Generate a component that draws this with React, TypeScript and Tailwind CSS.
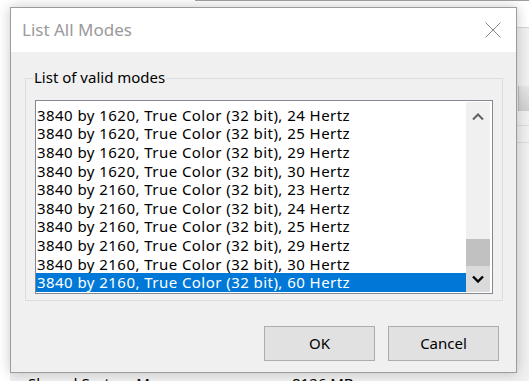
import { useState } from "react"

const modes = [
    "3840 by 1620, True Color (32 bit), 24 Hertz",
    "3840 by 1620, True Color (32 bit), 25 Hertz",
    "3840 by 1620, True Color (32 bit), 29 Hertz",
    "3840 by 1620, True Color (32 bit), 30 Hertz",
    "3840 by 2160, True Color (32 bit), 23 Hertz",
    "3840 by 2160, True Color (32 bit), 24 Hertz",
    "3840 by 2160, True Color (32 bit), 25 Hertz",
    "3840 by 2160, True Color (32 bit), 29 Hertz",
    "3840 by 2160, True Color (32 bit), 30 Hertz",
    "3840 by 2160, True Color (32 bit), 60 Hertz",
]

function Chevron({ down, className }: { down?: boolean, className: string }) {
    return (
        <svg width="12" height="8" viewBox="0 0 12 8" className={className}>
            <polyline
                points={down ? "1,1.5 6,6.5 11,1.5" : "1,6.5 6,1.5 11,6.5"}
                fill="none"
                stroke="currentColor"
                strokeWidth={down ? 2.4 : 2}
            />
        </svg>
    )
}

export default function App() {

    const [selected, setSelected] = useState(9)

    return (
        <div className="relative w-[529px] h-[381px] overflow-hidden bg-white font-['Noto_Sans',sans-serif] text-[15px] text-black">

            {/* ventana de fondo */}
            <div className="h-[27px] border-t border-[#a0a0a0] ml-[195px]" />
            <div className="ml-[10px] h-[354px] bg-[#f0f0f0] border-t border-[#d5d5d5] flex flex-col">
                <div className="flex justify-end mt-[58px]">
                    <div className="w-[11px] h-[25px] bg-gradient-to-b from-[#e6e6e6] to-[#cfcfcf] border-l border-[#bdbdbd]" />
                </div>
                <div className="ml-auto w-[12px] mt-[14px] border-t border-[#dcdcdc]" />
                <div className="ml-auto w-[12px] mt-[16px] border-t border-[#dcdcdc]" />
                <div className="flex mt-auto leading-[18px] -mb-[11px]">
                    <span className="ml-[18px] w-[264px]">Shared System Memory:</span>
                    <span>8126 MB</span>
                </div>
            </div>

            {/* dialogo */}
            <div className="absolute left-[10px] top-[7px] w-[507px] h-[366px] border border-[#9c9c9c] bg-[#f0f0f0] shadow-[0_0_12px_rgba(0,0,0,0.22)] flex flex-col">
                <div className="h-[44px] bg-white flex items-center justify-between pl-[11px] pr-[15px]">
                    <span className="text-[17px] text-[#9a9a9a] leading-[20px] -mt-[1px]">List All Modes</span>
                    <svg width="16" height="16" viewBox="0 0 16 16" className="text-[#8a8a8a]">
                        <path d="M0.5 0.5 L15.5 15.5 M15.5 0.5 L0.5 15.5" stroke="currentColor" strokeWidth="1" />
                    </svg>
                </div>

                <div className="pl-[14px] pt-[26px]">
                    <div className="relative w-[478px] h-[223px] border border-[#dcdcdc]">
                        <span className="absolute left-[7px] -top-[11px] px-[1px] bg-[#f0f0f0] leading-[19px]">List of valid modes</span>

                        <div className="ml-[9px] mt-[21px] w-[458px] h-[194px] border border-[#828790] bg-white flex">
                            <div className="w-[430px] flex flex-col justify-end pb-[1px] text-[15px] tracking-[0.45px]">
                                {modes.map((mode, i) => (
                                    <div
                                        key={mode}
                                        onClick={() => setSelected(i)}
                                        className={`h-[18.65px] leading-[18.65px] pl-[1px] whitespace-nowrap ${i === selected ? 'bg-[#0078d7] text-white' : ''}`}
                                    >
                                        {mode}
                                    </div>
                                ))}
                            </div>

                            <div className="w-[24px] mt-[1px] h-[190px] bg-[#f0f0f0] flex flex-col">
                                <div className="h-[26px] flex items-center justify-center pt-[3px]">
                                    <Chevron className="text-[#606060]" />
                                </div>
                                <div className="flex-1" />
                                <div className="h-[27px] bg-[#c1c1c1]" />
                                <div className="h-[26px] bg-[#dadada] flex items-center justify-center">
                                    <Chevron down className="text-black" />
                                </div>
                            </div>
                        </div>
                    </div>
                </div>

                <div className="flex justify-end gap-[13px] pr-[17px] mt-[25px]">
                    <button className="w-[111px] h-[35px] bg-[#e1e1e1] border border-[#adadad]">OK</button>
                    <button className="w-[111px] h-[35px] bg-[#e1e1e1] border border-[#adadad]">Cancel</button>
                </div>
            </div>
        </div>
    )
}
